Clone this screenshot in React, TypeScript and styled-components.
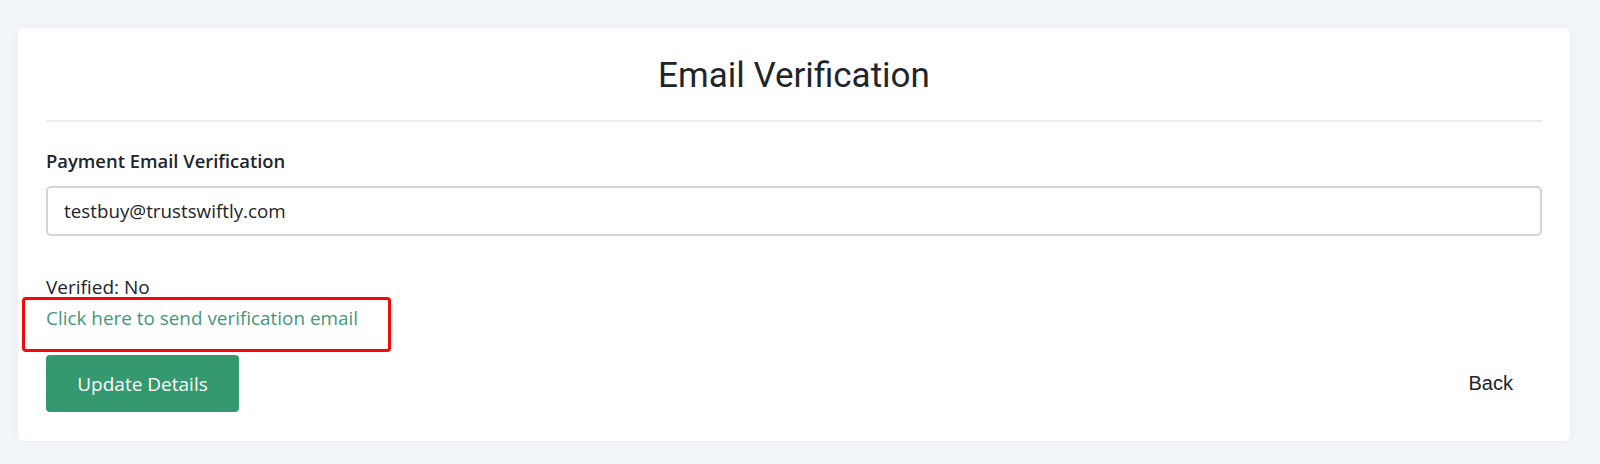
import React from "react";
import styled, { createGlobalStyle } from "styled-components";

const Global = createGlobalStyle`
  html, body { margin: 0; padding: 0; background: #f3f6f9; }
  body { font-family: "Open Sans", "Noto Sans", sans-serif; color: #212529; }
  * { box-sizing: border-box; }
`;

const Page = styled.div`
  width: 1600px;
  height: 464px;
  padding: 28px 30px 23px 18px;
  background: #f3f6f9;
`;

const Card = styled.div`
  background: #ffffff;
  border-radius: 6px;
  box-shadow: 0 0 10px rgba(30, 50, 80, 0.06);
  padding: 0 28px 29px;
  height: 413px;
`;

const Header = styled.div`
  padding: 27px 0 23px;
  border-bottom: 2px solid #ececec;
  text-align: center;
`;

const Title = styled.h1`
  margin: 0;
  font-family: Roboto, "Liberation Sans", sans-serif;
  font-weight: 400;
  font-size: 35px;
  line-height: 42px;
  color: #212529;
`;

const Label = styled.label`
  display: block;
  margin-top: 27px;
  font-size: 18.4px;
  font-weight: 600;
  line-height: 24px;
  color: #212529;
`;

const Input = styled.input`
  display: block;
  width: 100%;
  height: 50px;
  margin-top: 13px;
  padding: 0 16px;
  border: 2px solid #d3d3d3;
  border-radius: 5px;
  font-family: "Open Sans", "Noto Sans", sans-serif;
  font-size: 18.8px;
  color: #212529;
  background: #fff;
  outline: none;
`;

const Status = styled.div`
  margin-top: 39px;
  font-size: 19px;
  line-height: 24px;
`;

const LinkWrap = styled.div`
  position: relative;
  margin-top: 7px;
  line-height: 24px;
`;

const Link = styled.a`
  font-size: 18.9px;
  color: #43987c;
  text-decoration: none;
  cursor: pointer;
`;

const Highlight = styled.span`
  position: absolute;
  left: -24px;
  top: -9px;
  width: 369px;
  height: 55px;
  border: 3px solid #f00a0a;
  border-radius: 4px;
  pointer-events: none;
`;

const Footer = styled.div`
  display: flex;
  justify-content: space-between;
  align-items: center;
  margin-top: 24px;
`;

const PrimaryButton = styled.button`
  width: 193px;
  height: 57px;
  border: none;
  border-radius: 4px;
  background: #35996f;
  color: #ffffff;
  font-family: "Open Sans", "Noto Sans", sans-serif;
  font-size: 19px;
  cursor: pointer;
`;

const BackButton = styled.button`
  border: none;
  background: transparent;
  padding: 0 29px 0 0;
  font-family: "Liberation Sans", Arial, sans-serif;
  font-size: 20px;
  color: #212529;
  cursor: pointer;
`;

export default function App() {
  return (
    <>
      <Global />
      <Page>
        <Card>
          <Header>
            <Title>Email Verification</Title>
          </Header>
          <Label htmlFor="pay-email">Payment Email Verification</Label>
          <Input id="pay-email" defaultValue="testbuy@trustswiftly.com" />
          <Status>Verified: No</Status>
          <LinkWrap>
            <Link>Click here to send verification email</Link>
            <Highlight />
          </LinkWrap>
          <Footer>
            <PrimaryButton>Update Details</PrimaryButton>
            <BackButton>Back</BackButton>
          </Footer>
        </Card>
      </Page>
    </>
  );
}
